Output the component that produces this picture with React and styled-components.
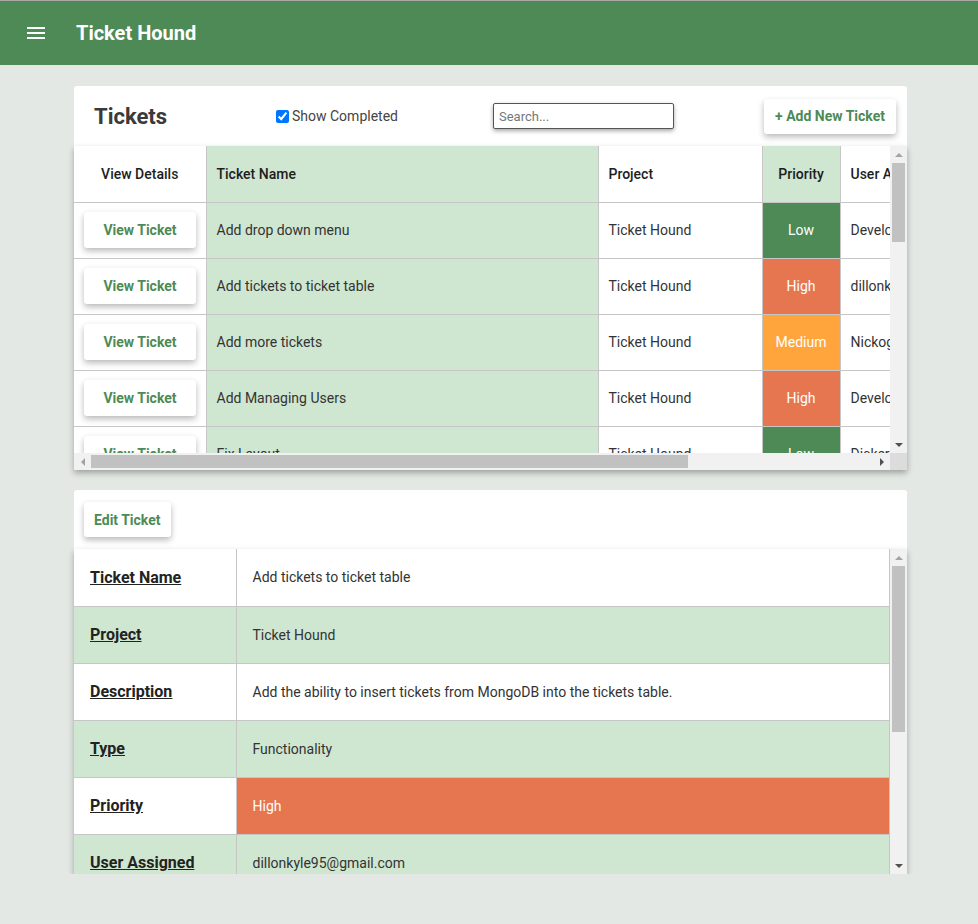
import React, { useLayoutEffect, useRef, useState } from 'react';
import styled, { createGlobalStyle } from 'styled-components';

const GREEN = '#4e8a56';
const LIGHT = '#cfe6d1';
const LINE = '#c6c6c6';
const PRIORITY = { Low: '#4e8a56', High: '#e67650', Medium: '#ffa53c' };
const BAR = 17;

const GlobalStyle = createGlobalStyle`
  html, body {
    margin: 0;
    background: #e3e8e4;
    font-family: Roboto, 'Liberation Sans', sans-serif;
    color: #333;
  }
`;

const TopBar = styled.header`
  height: 64px;
  background: ${GREEN};
  border-top: 1px solid #a9a9a9;
  display: flex;
  align-items: center;
  padding-left: 27px;
  gap: 31px;
`;

const Burger = styled.div`
  width: 18px;
  display: flex;
  flex-direction: column;
  gap: 3px;
  span {
    height: 2px;
    background: #fff;
  }
`;

const Brand = styled.h1`
  margin: 0;
  color: #fff;
  font-size: 20px;
  font-weight: 700;
`;

const Main = styled.main`
  width: 833px;
  margin: 21px 0 0 74px;
  display: flex;
  flex-direction: column;
  gap: 20px;
`;

const Card = styled.section`
  background: #fff;
  border-radius: 3px 3px 0 0;
`;

const CardHead = styled.div`
  height: ${p => p.$h}px;
  display: grid;
  grid-template-columns: ${p => p.$cols};
  align-items: center;
  padding: 0 11px 0 ${p => p.$pl}px;
`;

const Title = styled.h2`
  margin: 0;
  font-size: 22px;
  font-weight: 700;
  color: #3a3a3a;
`;

const CheckLabel = styled.label`
  display: flex;
  align-items: center;
  font-size: 14px;
  color: #444;
  input {
    margin: 0 3px 0 0;
    width: 13px;
    height: 13px;
  }
`;

const Search = styled.input`
  width: 181px;
  height: 26px;
  box-sizing: border-box;
  border: 1px solid #555;
  border-radius: 2px;
  padding: 0 5px;
  font-family: inherit;
  font-size: 13px;
  box-shadow: 0 2px 4px rgba(0, 0, 0, 0.35);
  &::placeholder { color: #777; }
`;

const Button = styled.button`
  height: ${p => p.$h || 36}px;
  width: ${p => (p.$w ? `${p.$w}px` : 'auto')};
  padding: 0 ${p => p.$px || 10}px;
  background: #fff;
  border: none;
  border-radius: 3px;
  color: ${GREEN};
  font-family: Roboto, 'Liberation Sans', sans-serif;
  font-weight: 700;
  font-size: 14px;
  box-shadow: 0 3px 6px rgba(0, 0, 0, 0.28);
  justify-self: ${p => p.$self || 'auto'};
`;

/* scroll pane with drawn scrollbars */
const Pane = styled.div`
  display: grid;
  grid-template-columns: 1fr ${BAR}px;
  grid-template-rows: ${p => p.$h}px ${p => (p.$hbar ? `${BAR}px` : '')};
  background: #fff;
  box-shadow: 0 3px 6px rgba(0, 0, 0, 0.3);
`;

const Viewport = styled.div`
  overflow: hidden;
`;

const Track = styled.div`
  display: flex;
  flex-direction: ${p => (p.$vertical ? 'column' : 'row')};
  background: #f1f1f1;
`;

const Rail = styled.div`
  flex: 1;
  display: flex;
  flex-direction: ${p => (p.$vertical ? 'column' : 'row')};
  padding: ${p => (p.$vertical ? '0 2px' : '2px 0')};
`;

const Thumb = styled.div`
  background: #c1c1c1;
  flex: none;
`;

const Arrow = styled.div`
  width: ${BAR}px;
  height: ${BAR}px;
  flex: none;
  display: flex;
  align-items: center;
  justify-content: center;
  &::before {
    content: '';
    border: 4px solid transparent;
    ${p => `border-${p.$from}-color: ${p.$active ? '#505050' : '#a3a3a3'};`}
    ${p => `border-${p.$dir}-width: 0;`}
  }
`;

const Corner = styled.div`
  background: #dcdcdc;
`;

function ScrollPane({ height, hbar, children }) {
  const ref = useRef(null);
  const [ratio, setRatio] = useState({ v: 1, h: 1 });

  useLayoutEffect(() => {
    const el = ref.current;
    setRatio({ v: el.clientHeight / el.scrollHeight, h: el.clientWidth / el.scrollWidth });
  }, []);

  return (
    <Pane $h={height} $hbar={hbar}>
      <Viewport ref={ref}>{children}</Viewport>
      <Track $vertical>
        <Arrow $from="bottom" $dir="top" />
        <Rail $vertical>
          <Thumb style={{ height: `${ratio.v * 100}%` }} />
        </Rail>
        <Arrow $from="top" $dir="bottom" $active />
      </Track>
      {hbar && (
        <>
          <Track>
            <Arrow $from="right" $dir="left" />
            <Rail>
              <Thumb style={{ width: `${ratio.h * 100}%` }} />
            </Rail>
            <Arrow $from="left" $dir="right" $active />
          </Track>
          <Corner />
        </>
      )}
    </Pane>
  );
}

const Table = styled.table`
  border-collapse: collapse;
  table-layout: fixed;
  width: ${p => p.$w}px;
  font-size: 14px;
`;

const Th = styled.th`
  box-sizing: border-box;
  width: ${p => p.$w}px;
  height: 56px;
  padding: 0 10px;
  text-align: ${p => (p.$center ? 'center' : 'left')};
  font-family: 'Roboto Medium', Roboto, 'Liberation Sans', sans-serif;
  font-weight: 500;
  color: #1e1e1e;
  background: ${p => (p.$green ? LIGHT : '#fff')};
  border-right: 1px solid ${LINE};
  border-bottom: 1px solid ${LINE};
  white-space: nowrap;
  overflow: hidden;
`;

const Td = styled.td`
  box-sizing: border-box;
  height: 56px;
  padding: 0 10px;
  text-align: ${p => (p.$center ? 'center' : 'left')};
  background: ${p => p.$bg || '#fff'};
  color: ${p => (p.$light ? '#fff' : '#333')};
  border-right: 1px solid ${LINE};
  border-bottom: 1px solid ${LINE};
  white-space: nowrap;
  overflow: hidden;
`;

const Label = styled.td`
  box-sizing: border-box;
  width: 162px;
  height: 57px;
  padding: 0 16px;
  font-size: 16px;
  font-weight: 700;
  text-decoration: underline;
  color: #222;
  background: ${p => (p.$alt ? LIGHT : '#fff')};
  border-right: 1px solid ${LINE};
  border-bottom: 1px solid ${LINE};
`;

const Value = styled.td`
  padding: 0 16px;
  font-size: 14px;
  background: ${p => p.$bg};
  color: ${p => (p.$light ? '#fff' : '#333')};
  border-right: 1px solid ${LINE};
  border-bottom: 1px solid ${LINE};
`;

const tickets = [
  ['Add drop down menu', 'Low', 'Developer Demo', 'Open'],
  ['Add tickets to ticket table', 'High', 'dillonkyle95@gmail.com', 'Open'],
  ['Add more tickets', 'Medium', 'Nickogoss@gmail.com', 'Open'],
  ['Add Managing Users', 'High', 'Developer Demo', 'Open'],
  ['Fix Layout', 'Low', 'Dickerson Demo', 'Open'],
  ['Add login page', 'Medium', 'dillonkyle95@gmail.com', 'Open'],
  ['Connect MongoDB', 'High', 'Developer Demo', 'Closed'],
  ['Style navbar', 'Low', 'Nickogoss@gmail.com', 'Open'],
  ['Add search bar', 'Medium', 'Developer Demo', 'Open'],
  ['Add ticket details', 'High', 'dillonkyle95@gmail.com', 'Open'],
  ['Edit ticket form', 'Medium', 'Dickerson Demo', 'Open'],
  ['Add projects page', 'Low', 'Developer Demo', 'Open'],
  ['Add user roles', 'High', 'Nickogoss@gmail.com', 'Open'],
  ['Fix table scrolling', 'Low', 'dillonkyle95@gmail.com', 'Closed'],
  ['Add comments', 'Medium', 'Developer Demo', 'Open'],
  ['Add ticket history', 'Low', 'Dickerson Demo', 'Open'],
  ['Deploy to Heroku', 'High', 'dillonkyle95@gmail.com', 'Open'],
  ['Write README', 'Low', 'Developer Demo', 'Open'],
];

const details = [
  ['Ticket Name', 'Add tickets to ticket table'],
  ['Project', 'Ticket Hound'],
  ['Description', 'Add the ability to insert tickets from MongoDB into the tickets table.'],
  ['Type', 'Functionality'],
  ['Priority', 'High'],
  ['User Assigned', 'dillonkyle95@gmail.com'],
  ['Status', 'Open'],
  ['Submitted By', 'Developer Demo'],
  ['Date Created', '03/12/2021'],
  ['Last Updated', '03/14/2021'],
];

export default function App() {
  const [showCompleted, setShowCompleted] = useState(true);

  return (
    <>
      <GlobalStyle />
      <TopBar>
        <Burger><span /><span /><span /></Burger>
        <Brand>Ticket Hound</Brand>
      </TopBar>
      <Main>
        <Card>
          <CardHead $h={60} $pl={20} $cols="182px 217px 1fr auto">
            <Title>Tickets</Title>
            <CheckLabel>
              <input type="checkbox" checked={showCompleted} onChange={e => setShowCompleted(e.target.checked)} />
              Show Completed
            </CheckLabel>
            <Search placeholder="Search..." />
            <Button $h={35} $px={11}>+ Add New Ticket</Button>
          </CardHead>
          <ScrollPane height={307} hbar>
            <Table $w={1068}>
              <thead>
                <tr>
                  <Th $w={132} $center>View Details</Th>
                  <Th $w={392} $green>Ticket Name</Th>
                  <Th $w={164}>Project</Th>
                  <Th $w={78} $green $center>Priority</Th>
                  <Th $w={200}>User Assigned</Th>
                  <Th $w={102} $green>Status</Th>
                </tr>
              </thead>
              <tbody>
                {tickets.map(([name, priority, user, status]) => (
                  <tr key={name}>
                    <Td $center><Button $px={0} $w={112}>View Ticket</Button></Td>
                    <Td $bg={LIGHT}>{name}</Td>
                    <Td>Ticket Hound</Td>
                    <Td $center $bg={PRIORITY[priority]} $light>{priority}</Td>
                    <Td>{user}</Td>
                    <Td $bg={LIGHT}>{status}</Td>
                  </tr>
                ))}
              </tbody>
            </Table>
          </ScrollPane>
        </Card>
        <Card>
          <CardHead $h={59} $pl={10} $cols="auto">
            <Button $h={35} $px={10} $self="start">Edit Ticket</Button>
          </CardHead>
          <ScrollPane height={325}>
            <Table $w={816}>
              <tbody>
                {details.map(([label, value], i) => {
                  const alt = i % 2 === 1;
                  const hot = label === 'Priority';
                  return (
                    <tr key={label}>
                      <Label $alt={alt}>{label}</Label>
                      <Value $bg={hot ? PRIORITY[value] : alt ? LIGHT : '#fff'} $light={hot}>{value}</Value>
                    </tr>
                  );
                })}
              </tbody>
            </Table>
          </ScrollPane>
        </Card>
      </Main>
    </>
  );
}
